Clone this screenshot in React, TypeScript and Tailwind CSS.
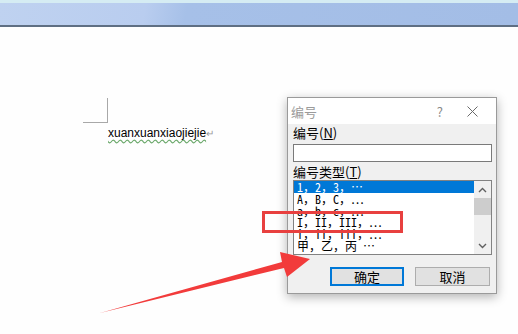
const listItems = [
  '1，2，3，⋯',
  'A，B，C，⋯',
  'a，b，c，⋯',
  'I，II，III，⋯',
  'i，ii，iii，⋯',
  '甲，乙，丙 ⋯',
];

const cjk = "font-['Noto_Sans_Mono_CJK_SC','Noto_Sans_CJK_SC',sans-serif]";

function ChevronUp() {
  return (
    <svg width="9" height="6" viewBox="0 0 9 6">
      <path d="M1 5 L4.5 1.5 L8 5" fill="none" stroke="#606060" strokeWidth="1.4" />
    </svg>
  );
}

function ChevronDown() {
  return (
    <svg width="9" height="6" viewBox="0 0 9 6">
      <path d="M1 1 L4.5 4.5 L8 1" fill="none" stroke="#606060" strokeWidth="1.4" />
    </svg>
  );
}

function NumberingDialog() {
  return (
    <div className="absolute left-[287px] top-[97px] w-[210px] h-[197px] border border-[#9a9a9a] bg-[#f0f0f0] shadow-[0_3px_10px_rgba(0,0,0,0.3)] flex flex-col font-['Noto_Sans_CJK_SC',sans-serif]">
      <div className="h-[26px] bg-white flex items-center pl-[3px] pr-[18px] shrink-0">
        <span className="text-[13px] text-[#9b9b9b] leading-none">编号</span>
        <span className="ml-auto text-[13px] text-[#8a8a8a] leading-none mr-[24px]">?</span>
        <svg width="11" height="11" viewBox="0 0 11 11">
          <path d="M0.5 0.5 L10.5 10.5 M10.5 0.5 L0.5 10.5" stroke="#6a6a6a" strokeWidth="1" />
        </svg>
      </div>
      <div className="flex flex-col px-[5px]">
        <div className="text-[13px] leading-[16px] mt-[1px] text-black">
          编号(<span className="underline">N</span>)
        </div>
        <div className="h-[18px] w-[199px] mt-[3px] bg-white border border-[#7a7a7a]" />
        <div className="text-[13px] leading-[16px] mt-[2px] text-black">
          编号类型(<span className="underline">T</span>)
        </div>
        <div className="w-[199px] h-[75px] bg-white border border-[#828282] flex">
          <div className={`flex-1 flex flex-col overflow-hidden ${cjk}`}>
            {listItems.map((item, i) => (
              <div
                key={item}
                className={`h-[11.8px] text-[12px] leading-[11.8px] pl-[3px] whitespace-nowrap ${
                  i === 0 ? 'bg-[#0078d7] text-white' : 'text-black'
                }`}
              >
                {item}
              </div>
            ))}
          </div>
          <div className="w-[17px] bg-[#f0f0f0] flex flex-col items-center">
            <div className="h-[17px] flex items-center justify-center">
              <ChevronUp />
            </div>
            <div className="w-[17px] h-[17px] bg-[#cdcdcd]" />
            <div className="mt-auto h-[17px] flex items-center justify-center">
              <ChevronDown />
            </div>
          </div>
        </div>
        <div className="flex justify-end gap-[11px] mt-[12px] pr-[1px]">
          <button className="w-[74px] h-[19px] border-2 border-[#0078d7] bg-[#e1e1e1] text-[13px] leading-none text-black">
            确定
          </button>
          <button className="w-[75px] h-[19px] border border-[#adadad] bg-[#e1e1e1] text-[13px] leading-none text-black">
            取消
          </button>
        </div>
      </div>
    </div>
  );
}

export default function App() {
  return (
    <div className="relative w-[518px] h-[334px] overflow-hidden bg-[#fefefe]">
      <div className="h-[3px] bg-[#d5ecf3]" />
      <div className="h-[22px] bg-[linear-gradient(100deg,#bfd2f0_0%,#b9cdef_28%,#a6c0e8_36%,#a3bde6_100%)]" />
      <div className="h-[2px] bg-[#5f6f83]" />

      <div className="ml-[83px] mt-[71px] w-[25px] h-[25px] border-r border-b border-[#a8a8a8]" />
      <div className="ml-[108px] mt-[3px] text-[12px] leading-[14px] text-black font-['Liberation_Sans',sans-serif]">
        <span className="underline decoration-wavy decoration-[#6aa86a] underline-offset-2">
          xuanxuanxiaojiejie
        </span>
        <span className="text-[#9a9a9a] text-[10px]">↵</span>
      </div>

      <NumberingDialog />

      <div className="absolute left-[262px] top-[211px] w-[141px] h-[22px] border-[3px] border-[#e8403f]" />

      <svg className="absolute left-0 top-0" width="518" height="334" viewBox="0 0 518 334">
        <polygon
          points="100,313 282,262 280,252 310,259 287,277 284,268"
          fill="#f23b3b"
        />
      </svg>
    </div>
  );
}
